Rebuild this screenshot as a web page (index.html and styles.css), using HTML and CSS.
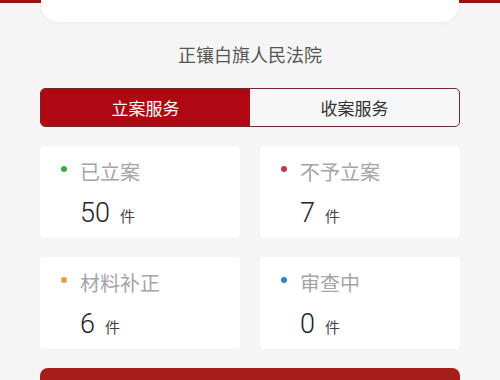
FILE: index.html
```html
<!DOCTYPE html>
<html>

<head>
    <title>立案服务</title>
    <link rel="stylesheet" href="styles.css">
</head>

<body>
    <div class="top">
        <div class="top-edge"></div>
        <div class="top-card"></div>
        <div class="top-edge"></div>
    </div>

    <div class="court">正镶白旗人民法院</div>

    <div class="tabs">
        <div class="tab active">立案服务</div>
        <div class="tab">收案服务</div>
    </div>

    <div class="stats">
        <div class="stat">
            <div class="stat-label"><span class="dot green"></span>已立案</div>
            <div class="stat-num">50<span class="unit">件</span></div>
        </div>
        <div class="stat">
            <div class="stat-label"><span class="dot red"></span>不予立案</div>
            <div class="stat-num">7<span class="unit">件</span></div>
        </div>
        <div class="stat">
            <div class="stat-label"><span class="dot orange"></span>材料补正</div>
            <div class="stat-num">6<span class="unit">件</span></div>
        </div>
        <div class="stat">
            <div class="stat-label"><span class="dot blue"></span>审查中</div>
            <div class="stat-num">0<span class="unit">件</span></div>
        </div>
    </div>

    <div class="action"></div>
</body>

</html>
```

FILE: styles.css
```css
body {
    margin: 0;
    height: 380px;
    background-color: #f5f5f5;
    font-family: "Noto Sans CJK SC", "Noto Sans", sans-serif;
    overflow: hidden;
}

.top {
    display: flex;
    align-items: flex-start;
}

.top-edge {
    width: 41px;
    height: 3px;
    background-color: #9e1010;
}

.top-card {
    flex: 1;
    height: 22px;
    background-color: #fff;
    border-radius: 0 0 18px 18px;
    box-shadow: 0 2px 4px rgba(0, 0, 0, 0.03);
}

.court {
    margin-top: 19px;
    text-align: center;
    font-size: 18px;
    line-height: 26px;
    color: #555;
}

.tabs {
    display: flex;
    margin: 21px 40px 0;
    height: 37px;
    border: 1px solid #6e2a30;
    border-radius: 5px;
    overflow: hidden;
    background-color: #f8f7f7;
}

.tab {
    flex: 1;
    display: flex;
    align-items: center;
    justify-content: center;
    font-size: 17px;
    color: #333;
}

.tab.active {
    background-color: #ae0812;
    color: #fff;
}

.stats {
    display: grid;
    grid-template-columns: 1fr 1fr;
    column-gap: 20px;
    row-gap: 19px;
    margin: 19px 40px 0;
}

.stat {
    height: 92px;
    box-sizing: border-box;
    background-color: #fff;
    border-radius: 4px;
    padding: 11px 0 0 21px;
}

.stat-label {
    display: flex;
    align-items: center;
    gap: 13px;
    height: 28px;
    font-size: 20px;
    color: #a5a5a5;
}

.dot {
    width: 6px;
    height: 6px;
    border-radius: 50%;
    margin-top: -5px;
}

.green { background-color: #2faf46; }
.red { background-color: #c13748; }
.orange { background-color: #e0a048; }
.blue { background-color: #2886d0; }

.stat-num {
    display: flex;
    align-items: baseline;
    height: 30px;
    margin: 12px 0 0 19px;
    font-family: Roboto, "Noto Sans", sans-serif;
    font-weight: 300;
    font-size: 27px;
    color: #222;
}

.unit {
    margin-left: 10px;
    font-family: "Noto Sans CJK SC", sans-serif;
    font-weight: 400;
    font-size: 15px;
    color: #444;
}

.action {
    margin: 19px 40px 0;
    height: 20px;
    background-color: #a61d1a;
    border-radius: 8px 8px 0 0;
}
```
